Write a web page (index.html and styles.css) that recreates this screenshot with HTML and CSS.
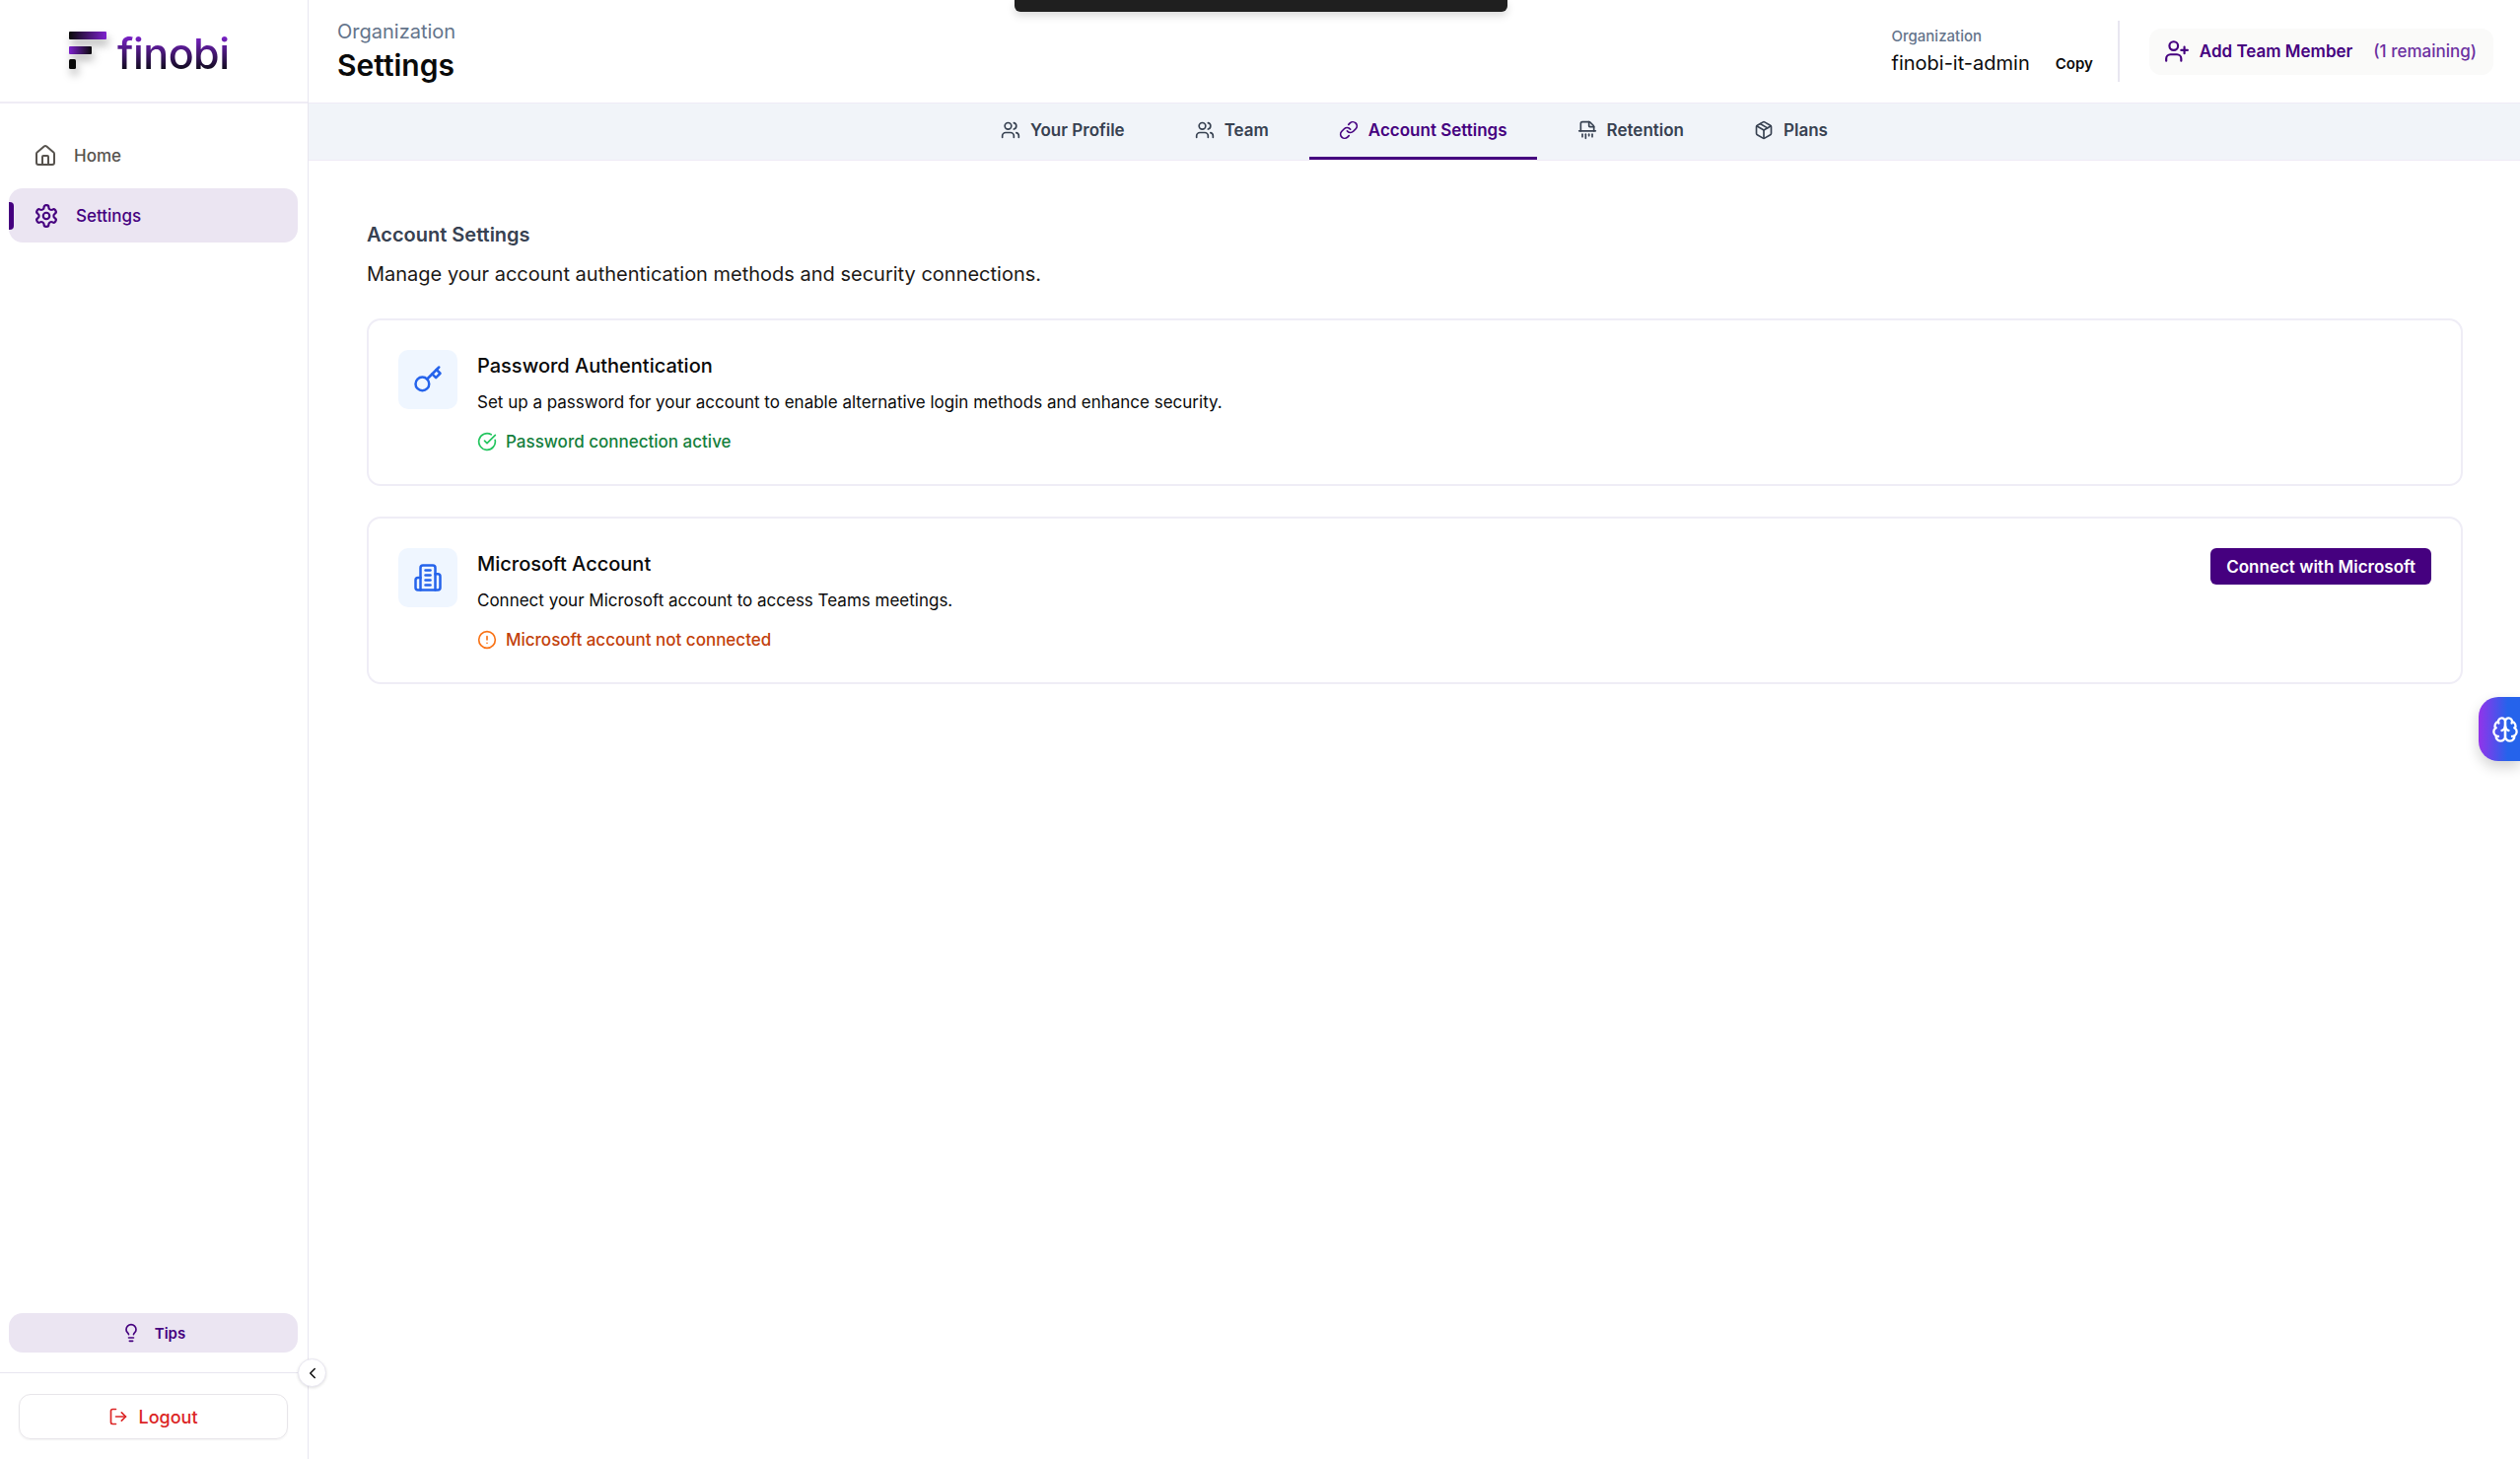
FILE: index.html
```html
<!DOCTYPE html>
<html lang="en">
<head>
  <meta charset="UTF-8" />
  <title>Settings - finobi</title>
  <link rel="stylesheet" href="styles.css">
</head>
<body>
  <div class="toast"></div>

  <div class="app">
    <aside class="sidebar">
      <div class="logo">
        <svg class="logo-mark" width="48" height="56" viewBox="0 0 48 56">
          <defs>
            <linearGradient id="barA"><stop offset="0" stop-color="#0a0a0a"/><stop offset="1" stop-color="#7e22ce"/></linearGradient>
            <linearGradient id="barB"><stop offset="0" stop-color="#7e22ce"/><stop offset="1" stop-color="#0a0a0a"/></linearGradient>
          </defs>
          <rect x="4" y="2" width="38" height="8" rx="1" fill="url(#barA)"/>
          <rect x="4" y="17" width="23" height="8" rx="1" fill="url(#barB)"/>
          <rect x="4" y="30" width="7" height="10" rx="1.5" fill="#0a0a0a"/>
        </svg>
        <span class="logo-text">finobi</span>
      </div>

      <nav class="nav">
        <a class="nav-item">
          <svg class="icon" width="24" height="24" viewBox="0 0 24 24"><path d="M15 21v-8a1 1 0 0 0-1-1h-4a1 1 0 0 0-1 1v8"/><path d="M3 10a2 2 0 0 1 .709-1.528l7-5.999a2 2 0 0 1 2.582 0l7 5.999A2 2 0 0 1 21 10v9a2 2 0 0 1-2 2H5a2 2 0 0 1-2-2z"/></svg>
          Home
        </a>
        <a class="nav-item active">
          <svg class="icon" width="26" height="26" viewBox="0 0 24 24"><path d="M12.22 2h-.44a2 2 0 0 0-2 2v.18a2 2 0 0 1-1 1.73l-.43.25a2 2 0 0 1-2 0l-.15-.08a2 2 0 0 0-2.73.73l-.22.38a2 2 0 0 0 .73 2.73l.15.1a2 2 0 0 1 1 1.72v.51a2 2 0 0 1-1 1.74l-.15.09a2 2 0 0 0-.73 2.73l.22.38a2 2 0 0 0 2.73.73l.15-.08a2 2 0 0 1 2 0l.43.25a2 2 0 0 1 1 1.73V20a2 2 0 0 0 2 2h.44a2 2 0 0 0 2-2v-.18a2 2 0 0 1 1-1.73l.43-.25a2 2 0 0 1 2 0l.15.08a2 2 0 0 0 2.73-.73l.22-.39a2 2 0 0 0-.73-2.73l-.15-.08a2 2 0 0 1-1-1.74v-.5a2 2 0 0 1 1-1.74l.15-.09a2 2 0 0 0 .73-2.73l-.22-.38a2 2 0 0 0-2.73-.73l-.15.08a2 2 0 0 1-2 0l-.43-.25a2 2 0 0 1-1-1.73V4a2 2 0 0 0-2-2z"/><circle cx="12" cy="12" r="3"/></svg>
          Settings
        </a>
      </nav>

      <div class="sidebar-tips">
        <button class="tips-btn">
          <svg class="icon" width="20" height="20" viewBox="0 0 24 24"><path d="M15 14c.2-1 .7-1.7 1.5-2.5 1-.9 1.5-2.2 1.5-3.5A6 6 0 0 0 6 8c0 1 .2 2.2 1.5 3.5.7.7 1.3 1.5 1.5 2.5"/><path d="M9 18h6"/><path d="M10 22h4"/></svg>
          Tips
        </button>
      </div>
      <div class="sidebar-foot">
        <button class="collapse-btn">
          <svg class="icon" width="18" height="18" viewBox="0 0 24 24"><path d="m15 18-6-6 6-6"/></svg>
        </button>
        <button class="logout-btn">
          <svg class="icon" width="20" height="20" viewBox="0 0 24 24"><path d="M9 21H5a2 2 0 0 1-2-2V5a2 2 0 0 1 2-2h4"/><polyline points="16 17 21 12 16 7"/><line x1="21" x2="9" y1="12" y2="12"/></svg>
          Logout
        </button>
      </div>
    </aside>

    <main class="main">
      <header class="topbar">
        <div class="page-title">
          <div class="page-org">Organization</div>
          <h1>Settings</h1>
        </div>
        <div class="topbar-right">
          <div class="org-info">
            <div class="org-label">Organization</div>
            <div class="org-row">
              <span class="org-name">finobi-it-admin</span>
              <span class="org-copy">Copy</span>
            </div>
          </div>
          <div class="divider"></div>
          <button class="add-member">
            <svg class="icon" width="26" height="26" viewBox="0 0 24 24"><path d="M16 21v-2a4 4 0 0 0-4-4H6a4 4 0 0 0-4 4v2"/><circle cx="9" cy="7" r="4"/><line x1="19" x2="19" y1="8" y2="14"/><line x1="22" x2="16" y1="11" y2="11"/></svg>
            <span>Add Team Member</span>
            <span class="remaining">(1 remaining)</span>
          </button>
        </div>
      </header>

      <div class="tabs">
        <a class="tab">
          <svg class="icon" width="20" height="20" viewBox="0 0 24 24"><path d="M16 21v-2a4 4 0 0 0-4-4H6a4 4 0 0 0-4 4v2"/><circle cx="9" cy="7" r="4"/><path d="M22 21v-2a4 4 0 0 0-3-3.87"/><path d="M16 3.13a4 4 0 0 1 0 7.75"/></svg>
          Your Profile
        </a>
        <a class="tab">
          <svg class="icon" width="20" height="20" viewBox="0 0 24 24"><path d="M16 21v-2a4 4 0 0 0-4-4H6a4 4 0 0 0-4 4v2"/><circle cx="9" cy="7" r="4"/><path d="M22 21v-2a4 4 0 0 0-3-3.87"/><path d="M16 3.13a4 4 0 0 1 0 7.75"/></svg>
          Team
        </a>
        <a class="tab active">
          <svg class="icon" width="20" height="20" viewBox="0 0 24 24"><path d="M10 13a5 5 0 0 0 7.54.54l3-3a5 5 0 0 0-7.07-7.07l-1.72 1.71"/><path d="M14 11a5 5 0 0 0-7.54-.54l-3 3a5 5 0 0 0 7.07 7.07l1.71-1.71"/></svg>
          Account Settings
        </a>
        <a class="tab">
          <svg class="icon" width="20" height="20" viewBox="0 0 24 24"><path d="M4 13V4a2 2 0 0 1 2-2h8a2.4 2.4 0 0 1 1.706.706l3.588 3.588A2.4 2.4 0 0 1 20 8v5"/><path d="M14 2v5a1 1 0 0 0 1 1h5"/><path d="M10 22v-5"/><path d="M14 19v-2"/><path d="M18 20v-3"/><path d="M2 13h20"/><path d="M6 20v-3"/></svg>
          Retention
        </a>
        <a class="tab">
          <svg class="icon" width="20" height="20" viewBox="0 0 24 24"><path d="M11 21.73a2 2 0 0 0 2 0l7-4A2 2 0 0 0 21 16V8a2 2 0 0 0-1-1.73l-7-4a2 2 0 0 0-2 0l-7 4A2 2 0 0 0 3 8v8a2 2 0 0 0 1 1.73z"/><path d="M12 22V12"/><path d="M3.3 7 12 12l8.7-5"/><path d="m7.5 4.27 9 5.15"/></svg>
          Plans
        </a>
      </div>

      <section class="content">
        <h2>Account Settings</h2>
        <p class="lead">Manage your account authentication methods and security connections.</p>

        <div class="card">
          <div class="card-icon">
            <svg class="icon" width="30" height="30" viewBox="0 0 24 24"><path d="m21 2-9.6 9.6"/><circle cx="7.5" cy="15.5" r="5.5"/><path d="m15.5 7.5 3 3L22 7l-3-3"/></svg>
          </div>
          <div class="card-body">
            <h3>Password Authentication</h3>
            <p>Set up a password for your account to enable alternative login methods and enhance security.</p>
            <div class="status ok">
              <svg class="icon" width="20" height="20" viewBox="0 0 24 24"><path d="M21.801 10A10 10 0 1 1 17 3.335"/><path d="m9 11 3 3L22 4"/></svg>
              Password connection active
            </div>
          </div>
        </div>

        <div class="card">
          <div class="card-icon">
            <svg class="icon" width="30" height="30" viewBox="0 0 24 24"><path d="M6 22V4a2 2 0 0 1 2-2h8a2 2 0 0 1 2 2v18Z"/><path d="M6 12H4a2 2 0 0 0-2 2v6a2 2 0 0 0 2 2h2"/><path d="M18 9h2a2 2 0 0 1 2 2v9a2 2 0 0 1-2 2h-2"/><path d="M10 6h4"/><path d="M10 10h4"/><path d="M10 14h4"/><path d="M10 18h4"/></svg>
          </div>
          <div class="card-body">
            <h3>Microsoft Account</h3>
            <p>Connect your Microsoft account to access Teams meetings.</p>
            <div class="status warn">
              <svg class="icon" width="20" height="20" viewBox="0 0 24 24"><circle cx="12" cy="12" r="10"/><line x1="12" x2="12" y1="8" y2="12"/><line x1="12" x2="12.01" y1="16" y2="16"/></svg>
              Microsoft account not connected
            </div>
          </div>
          <button class="connect-btn">Connect with Microsoft</button>
        </div>
      </section>
    </main>
  </div>

  <button class="brain-btn">
    <svg class="icon" width="28" height="28" viewBox="0 0 24 24"><path d="M12 5a3 3 0 1 0-5.997.125 4 4 0 0 0-2.526 5.77 4 4 0 0 0 .556 6.588A4 4 0 1 0 12 18Z"/><path d="M12 5a3 3 0 1 1 5.997.125 4 4 0 0 1 2.526 5.77 4 4 0 0 1-.556 6.588A4 4 0 1 1 12 18Z"/><path d="M15 13a4.5 4.5 0 0 1-3-4 4.5 4.5 0 0 1-3 4"/><path d="M17.599 6.5a3 3 0 0 0 .399-1.375"/><path d="M6.003 5.125A3 3 0 0 0 6.401 6.5"/><path d="M3.477 10.896a4 4 0 0 1 .585-.396"/><path d="M19.938 10.5a4 4 0 0 1 .585.396"/><path d="M6 18a4 4 0 0 1-1.967-.516"/><path d="M19.967 17.484A4 4 0 0 1 18 18"/></svg>
  </button>
</body>
</html>
```

FILE: styles.css
```css
* {
  box-sizing: border-box;
}

html, body {
  height: 100%;
}

body {
  margin: 0;
  font-family: Inter, "Noto Sans", sans-serif;
  color: #0a0a0a;
  background: #fff;
  overflow: hidden;
}

button {
  font-family: inherit;
  border: none;
  background: none;
  padding: 0;
}

h1, h2, h3, p {
  margin: 0;
}

.icon {
  fill: none;
  stroke: currentColor;
  stroke-width: 2;
  stroke-linecap: round;
  stroke-linejoin: round;
  flex-shrink: 0;
}

.app {
  display: flex;
  height: 100vh;
}

/* sidebar */
.sidebar {
  position: relative;
  width: 313px;
  flex-shrink: 0;
  display: flex;
  flex-direction: column;
  border-right: 1px solid #e8e6f0;
}

.logo {
  height: 105px;
  flex-shrink: 0;
  display: flex;
  align-items: flex-start;
  padding: 30px 0 0 66px;
  border-bottom: 2px solid #efecf5;
}

.logo-mark {
  filter: drop-shadow(2px 6px 4px rgba(0, 0, 0, 0.28));
}

.logo-text {
  margin: 0 0 0 5px;
  font-size: 43px;
  line-height: 48px;
  font-weight: 500;
  letter-spacing: -0.5px;
  background: linear-gradient(180deg, #7e22ce 12%, #0a0a14 88%);
  -webkit-background-clip: text;
  background-clip: text;
  color: transparent;
}

.nav {
  flex: 1;
  display: flex;
  flex-direction: column;
  gap: 6px;
  padding: 25px 10px 0 9px;
}

.nav-item {
  position: relative;
  height: 55px;
  display: flex;
  align-items: center;
  gap: 17px;
  padding-left: 25px;
  font-size: 17px;
  font-weight: 500;
  color: #57534e;
  border-radius: 14px;
}

.nav-item.active {
  background: #ebe5f2;
  color: #45007f;
}

.nav-item.active::before {
  content: "";
  position: absolute;
  left: 0;
  top: 14px;
  width: 5px;
  height: 28px;
  border-radius: 0 4px 4px 0;
  background: #45007f;
}

.sidebar-tips {
  padding: 0 10px 20px 9px;
}

.tips-btn {
  width: 100%;
  height: 40px;
  display: flex;
  align-items: center;
  justify-content: center;
  gap: 14px;
  background: #ebe5f2;
  color: #45007f;
  font-size: 15px;
  font-weight: 600;
  border-radius: 14px;
}

.sidebar-foot {
  position: relative;
  height: 88px;
  padding: 21px 20px 0 19px;
  border-top: 1px solid #e8e6f0;
}

.collapse-btn {
  position: absolute;
  top: -15px;
  right: -19px;
  width: 29px;
  height: 29px;
  display: flex;
  align-items: center;
  justify-content: center;
  border-radius: 50%;
  background: #fff;
  border: 1px solid #e8e6f0;
  box-shadow: 0 1px 3px rgba(0, 0, 0, 0.12);
  color: #0a0a0a;
  z-index: 2;
}

.logout-btn {
  width: 100%;
  height: 46px;
  display: flex;
  align-items: center;
  justify-content: center;
  gap: 10px;
  color: #dc2626;
  font-size: 18px;
  font-weight: 500;
  border: 1px solid #e7e5e9;
  border-radius: 12px;
  box-shadow: 0 1px 2px rgba(0, 0, 0, 0.05);
}

/* main column */
.main {
  flex: 1;
  min-width: 0;
  display: flex;
  flex-direction: column;
}

.topbar {
  height: 104px;
  flex-shrink: 0;
  display: flex;
  align-items: center;
  justify-content: space-between;
  padding: 0 27px 0 29px;
}

.page-org {
  font-size: 20px;
  line-height: 26px;
  color: #64748b;
}

.page-title h1 {
  margin-top: 2px;
  font-size: 30px;
  line-height: 38px;
  font-weight: 600;
}

.topbar-right {
  display: flex;
  align-items: center;
}

.org-label {
  font-size: 15px;
  line-height: 20px;
  font-weight: 500;
  color: #64748b;
}

.org-row {
  display: flex;
  align-items: center;
  gap: 26px;
  margin-top: 3px;
}

.org-name {
  font-size: 20px;
  line-height: 28px;
}

.org-copy {
  font-size: 15px;
  font-weight: 600;
  margin-top: 2px;
}

.divider {
  width: 2px;
  height: 62px;
  margin: 0 30px 0 25px;
  background: #e8e6f0;
}

.add-member {
  height: 47px;
  display: flex;
  align-items: center;
  gap: 10px;
  padding: 0 17px 0 15px;
  border-radius: 12px;
  background: #fafaf9;
  color: #45007f;
  font-size: 17px;
  font-weight: 600;
}

.remaining {
  margin-left: 11px;
  font-weight: 500;
  color: #6b2fa0;
}

/* tabs */
.tabs {
  height: 59px;
  flex-shrink: 0;
  display: flex;
  justify-content: center;
  gap: 11px;
  background: #f1f4f9;
  border-top: 1px solid #efeaf6;
  border-bottom: 1px solid #efeaf6;
}

.tab {
  display: flex;
  align-items: center;
  gap: 10px;
  padding: 0 30px;
  font-size: 17px;
  font-weight: 600;
  color: #374151;
  border-bottom: 3px solid transparent;
}

.tab.active {
  color: #45007f;
  border-bottom-color: #45007f;
}

/* content */
.content {
  padding: 60px 58px 0 59px;
}

.content h2 {
  font-size: 20px;
  line-height: 30px;
  font-weight: 600;
  color: #374151;
}

.lead {
  margin-top: 10px;
  font-size: 20px;
  line-height: 30px;
  color: #1c1917;
}

.card {
  display: flex;
  align-items: flex-start;
  gap: 20px;
  padding: 30px;
  margin-top: 31px;
  border: 2px solid #efedf6;
  border-radius: 14px;
}

.lead + .card {
  margin-top: 30px;
}

.card-icon {
  width: 60px;
  height: 60px;
  flex-shrink: 0;
  display: flex;
  align-items: center;
  justify-content: center;
  border-radius: 10px;
  background: #eff6ff;
  color: #2563eb;
}

.card-body {
  flex: 1;
  padding-top: 1px;
}

.card-body h3 {
  font-size: 20px;
  line-height: 30px;
  font-weight: 500;
}

.card-body p {
  margin-top: 9px;
  font-size: 17px;
  line-height: 26px;
}

.status {
  display: flex;
  align-items: center;
  gap: 9px;
  margin-top: 14px;
  font-size: 17px;
  line-height: 26px;
  font-weight: 500;
}

.status.ok {
  color: #15803d;
}

.status.ok .icon {
  color: #22c55e;
}

.status.warn {
  color: #c2410c;
}

.status.warn .icon {
  color: #f97316;
}

.connect-btn {
  height: 37px;
  padding: 0 16px;
  background: #45007f;
  color: #fff;
  font-size: 17px;
  font-weight: 600;
  border-radius: 6px;
}

/* things floating over the page */
.toast {
  position: fixed;
  top: 0;
  left: 1029px;
  width: 500px;
  height: 12px;
  background: #1f1f1f;
  border-radius: 0 0 6px 6px;
  box-shadow: 0 4px 8px rgba(0, 0, 0, 0.15);
  z-index: 5;
}

.brain-btn {
  position: fixed;
  top: 707px;
  right: 0;
  width: 42px;
  height: 65px;
  display: flex;
  align-items: center;
  padding-left: 13px;
  border-radius: 20px 0 0 20px;
  background: linear-gradient(90deg, #9333ea, #2563eb 70%);
  box-shadow: 0 6px 14px rgba(0, 0, 0, 0.18);
  color: #fff;
}
```
